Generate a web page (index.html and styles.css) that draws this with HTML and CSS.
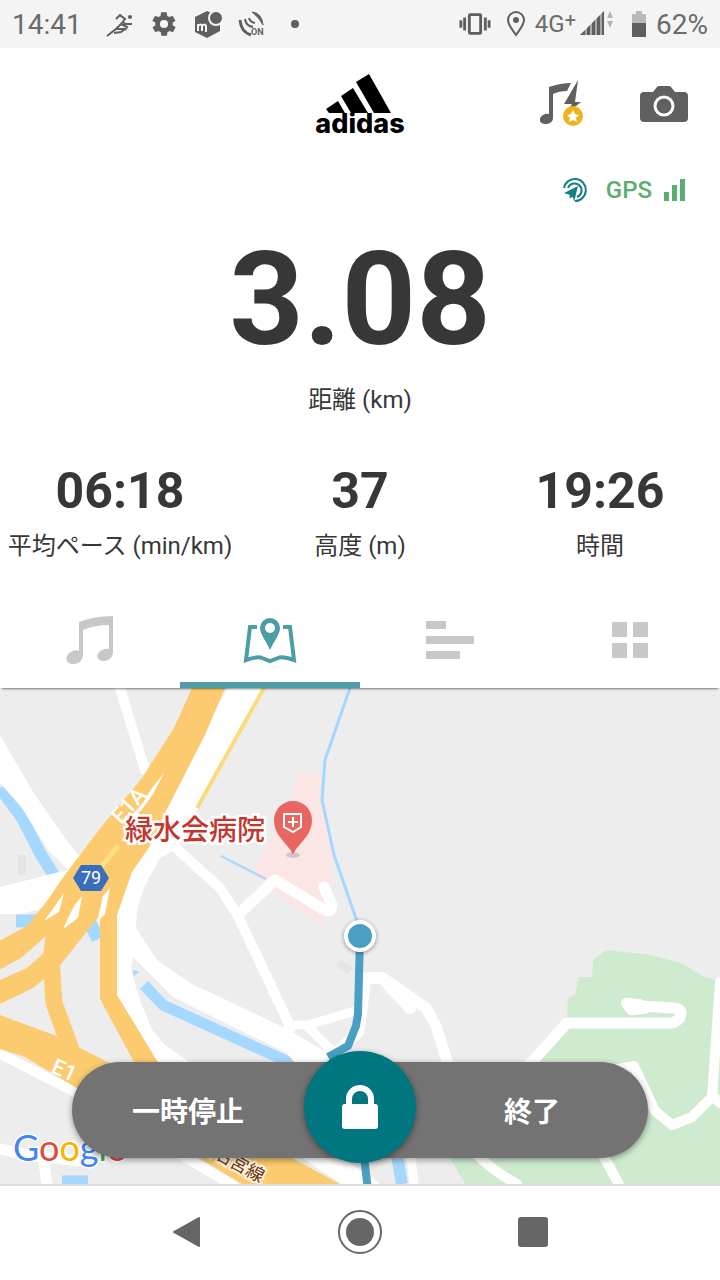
FILE: index.html
```html
<!DOCTYPE html>
<html lang="ja">
<head>
    <meta charset="UTF-8">
    <meta name="viewport" content="width=device-width, initial-scale=1.0">
    <title>adidas Running</title>
    <link rel="stylesheet" href="styles.css">
</head>
<body>

<div class="status-bar">
    <div class="status-left">
        <span class="clock">14:41</span>
        <svg class="status-icon" viewBox="0 0 28 28" fill="none" stroke="#5f5f5f" stroke-width="2">
            <path d="M1 26l9-7h9l-4 3-7 1M10 19l5-5 6 3-2 3M10 9l4-4 5 4-4 5M17 12l2 2h7"/>
            <circle cx="24" cy="7" r="2" fill="#5f5f5f" stroke="none"/>
        </svg>
        <svg class="status-icon" viewBox="0 0 24 24" fill="#5f5f5f">
            <path d="M19.4 13a7.500 7.500 0 0 0 0-2l2.100-1.600a.5.5 0 0 0 .1-.6l-2-3.500a.5.5 0 0 0-.6-.2l-2.500 1a7.300 7.300 0 0 0-1.700-1l-.4-2.600a.5.5 0 0 0-.5-.5h-4a.5.5 0 0 0-.5.5l-.4 2.600a7.300 7.300 0 0 0-1.700 1l-2.500-1a.5.5 0 0 0-.6.2l-2 3.500a.5.5 0 0 0 .1.600L4.600 11a7.500 7.500 0 0 0 0 2l-2.100 1.600a.5.5 0 0 0-.1.600l2 3.500c.1.200.4.300.6.200l2.500-1a7.300 7.300 0 0 0 1.700 1l.4 2.600c0 .3.200.5.500.5h4c.3 0 .5-.2.500-.5l.4-2.600a7.300 7.300 0 0 0 1.700-1l2.500 1c.2.100.5 0 .6-.2l2-3.500a.5.5 0 0 0-.1-.6zM12 15.500a3.500 3.500 0 1 1 0-7 3.500 3.500 0 0 1 0 7z"/>
        </svg>
        <svg class="status-icon" viewBox="0 0 28 28" fill="#5f5f5f">
            <path d="M1 7l12-6 13 6v14l-13 7-12-6z"/>
            <path d="M4 21v-7M4 16q3-3 4 0v5M8 16q3-3 4 0v6" fill="none" stroke="#f4f4f4" stroke-width="2"/>
            <circle cx="22" cy="8" r="7" stroke="#f4f4f4" stroke-width="2"/>
        </svg>
        <svg class="status-icon" viewBox="0 0 28 28" fill="none" stroke="#5f5f5f" stroke-width="2">
            <path d="M2 10q1 12 11 15" stroke-width="3"/>
            <path d="M7 9q1 7 8 8M11 8q1 4 6 5"/>
            <path d="M14 2q10 1 11 13-4-8-11-13z" fill="#5f5f5f" stroke-width="1"/>
            <text x="13" y="25" class="tiny-text">ON</text>
        </svg>
        <svg class="status-icon" viewBox="0 0 28 28"><circle cx="13" cy="14" r="4" fill="#5f5f5f"/></svg>
    </div>
    <div class="status-right">
        <svg width="32" height="26" viewBox="0 0 34 26" fill="none" stroke="#5f5f5f">
            <rect x="11" y="3" width="12" height="20" rx="1" stroke-width="3"/>
            <path d="M2 9v8M6 6v14M28 6v14M32 9v8" stroke-width="3"/>
        </svg>
        <svg width="18" height="26" viewBox="0 0 18 26" fill="none" stroke="#5f5f5f" stroke-width="2">
            <path d="M9 24C5 18 1 14 1 9a8 8 0 0 1 16 0c0 5-4 9-8 15z"/>
            <circle cx="9" cy="9" r="3" fill="#5f5f5f" stroke="none"/>
        </svg>
        <div class="network">
            <span class="network-type">4G<sup>+</sup></span>
            <svg width="36" height="26" viewBox="0 0 36 26">
                <path d="M0 24l24-24v24z" fill="#5f5f5f"/>
                <path d="M6 16v8M11 10v14M16 5v19M21 1v23" stroke="#f4f4f4" stroke-width="1"/>
                <path d="M27 7l3-7 3 7zM27 10l3 7 3-7z" fill="#b5b5b5"/>
            </svg>
        </div>
        <div class="battery">
            <svg width="14" height="26" viewBox="0 0 14 26">
                <path d="M0 3h4V0h6v3h4v9H0z" fill="#b9b9b9"/>
                <path d="M0 12h14v14H0z" fill="#5f5f5f"/>
            </svg>
            <span>62%</span>
        </div>
    </div>
</div>

<header class="header">
    <div class="logo">
        <svg width="89" height="40" viewBox="0 0 89 40">
            <path d="M40 8l13-8 22 39H58zM25 22l12-8 15 25H35zM10 35l12-8 7 12H13z"/>
        </svg>
        <span class="logo-name">adidas</span>
    </div>
    <div class="header-actions">
        <button class="icon-button" aria-label="音楽">
            <svg width="46" height="48" viewBox="0 0 46 48">
                <path d="M9 7q12-4 22-4l-4 8q-8 0-14 3v24c0 4-4 6-8 6-6 0-7-6-2-9q3-2 6-1z" fill="#606060"/>
                <path d="M38 0L24 24h8l-6 10 15-12h-6z" fill="#606060"/>
                <circle cx="33" cy="36" r="10" fill="#eeb41c"/>
                <path d="M33 30l2 4 4 1-3 3 1 4-4-2-4 2 1-4-3-3 4-1z" fill="#fff"/>
            </svg>
        </button>
        <button class="icon-button" aria-label="カメラ">
            <svg width="48" height="36" viewBox="0 0 48 36">
                <path d="M4 6h9l4-5q1-1 2-1h10q1 0 2 1l4 5h9q4 0 4 4v22q0 4-4 4H4q-4 0-4-4V10q0-4 4-4z" fill="#606060"/>
                <circle cx="24" cy="20" r="9" fill="none" stroke="#fff" stroke-width="3"/>
            </svg>
        </button>
    </div>
</header>

<div class="gps">
    <svg width="25" height="25" viewBox="0 0 25 25" fill="none" stroke="#147e85" stroke-width="2">
        <path d="M1 10A11 11 0 1 1 12 23"/>
        <path d="M5 10a7 7 0 1 1 9 9"/>
        <path d="M15 8L1 15l6 2-1 3 4-1 1 5z" fill="#147e85" stroke="none"/>
    </svg>
    <span>GPS</span>
    <svg width="22" height="22" viewBox="0 0 22 22" fill="#5bad72">
        <path d="M0 13h5v9H0zM8 6h5v16H8zM16 0h5v22h-5z"/>
    </svg>
</div>

<main>
    <div class="distance">
        <div class="distance-value">3.08</div>
        <div class="label">距離 (km)</div>
    </div>
    <div class="stats">
        <div class="stat">
            <div class="stat-value">06:18</div>
            <div class="label">平均ペース (min/km)</div>
        </div>
        <div class="stat">
            <div class="stat-value">37</div>
            <div class="label">高度 (m)</div>
        </div>
        <div class="stat">
            <div class="stat-value">19:26</div>
            <div class="label">時間</div>
        </div>
    </div>
</main>

<nav class="tabs">
    <button class="tab" aria-label="音楽">
        <svg width="48" height="48" viewBox="0 0 48 48">
            <path d="M13 6Q28 0 47 0v36c0 5-4 9-9 9-8 0-9-8-2-11q4-2 7-1V9q-14 0-26 5v24c0 6-4 10-9 10-9 0-10-9-3-12q4-3 8-1z"/>
        </svg>
    </button>
    <button class="tab active" aria-label="地図">
        <svg width="54" height="48" viewBox="0 0 54 48">
            <path d="M14 11H7L3 44q12-4 16-2l8 3 8-3q4-2 16 2l-4-33h-7" fill="none" stroke="#4d9da6" stroke-width="4"/>
            <path d="M27 34C23 25 17 18 17 12a10 10 0 0 1 20 0c0 6-6 13-10 22z"/>
            <circle cx="27" cy="12" r="5" fill="#fff"/>
        </svg>
    </button>
    <button class="tab" aria-label="ラップ">
        <svg width="48" height="38" viewBox="0 0 48 38">
            <path d="M0 0h20v8H0zM0 15h48v8H0zM0 30h34v8H0z"/>
        </svg>
    </button>
    <button class="tab" aria-label="詳細">
        <svg width="36" height="36" viewBox="0 0 36 36">
            <path d="M0 0h15v15H0zM21 0h15v15H21zM0 21h15v15H0zM21 21h15v15H21z"/>
        </svg>
    </button>
</nav>

<section class="map">
    <svg class="map-canvas" viewBox="0 688 720 496" preserveAspectRatio="xMidYMid slice">
        <!-- parks and hospital area -->
        <path class="park" d="M606 950l44 5 31 8 22 13 17 6v202H465l-15-26 60-58 57-82 1-20 7-3 4-18h13l1-17z"/>
        <path d="M298 772h22l4 40 10 50-12 63-50-35-20-15 12-25 26-40z" fill="#fbe6e5"/>

        <!-- water -->
        <g class="water">
            <path d="M350 688l-25 72-3 40 12 55 26 75" stroke-width="3"/>
            <path d="M221 856l45 23" stroke-width="2"/>
            <path d="M0 788l22 30 18 35 15 24" stroke-width="12"/>
            <path d="M16 921h28M76 895l22 44" stroke-width="13"/>
            <path d="M144 985l19 20 70 32 60 27" stroke-width="11"/>
            <path d="M62 1180h26" stroke-width="9"/>
            <path d="M396 1150l6 34" stroke-width="12"/>
        </g>

        <!-- white roads -->
        <path class="road-fill" d="M0 735l35 60 33 47 12 15-10 15-22-22-26-42L0 783zM0 887l75-19-30 40-25 6H0z"/>
        <path class="road-fill" d="M228 688H262L198 808 178 848 160 858 145 885 137 910 136 928 157 960 190 983 283 1027 323 1050 370 1070H300L287 1053 233 1027 173 997 133 957 131 970 140 1000 152 1030 165 1045 192 1064H140L100 1000V915z"/>
        <path d="M133 970l6 2-5 4z" fill="#a5d8ff"/>
        <g class="road">
            <path d="M120 688l25 82" stroke-width="10"/>
            <path d="M176 848l44 40 18 28 17 36 36 76" stroke-width="10"/>
            <path d="M240 913l35-33 48 29q9 5 9-4l-8-18" stroke-width="11"/>
            <path d="M288 1025h20l50-15M308 1027l24 24" stroke-width="9"/>
            <path d="M325 1062l34-30 7-54h17l43 30 10 18 12 38" stroke-width="11"/>
            <path d="M370 978h12l28 30" stroke-width="12"/>
            <path d="M530 1064l37-41h104q10-2 10-11-1-4-8-4l-33-2" stroke-width="11"/>
            <path d="M626 1003l14 1 5 5-14 1z" stroke-width="10"/>
            <path d="M720 982l-8 115-20 20-20 8-17-14-21-45-32 6M712 1095l8 8" stroke-width="10"/>
            <path d="M474 1152q20 20 43 32M600 1150l20 36" stroke-width="10"/>
            <path d="M410 1150l4 34" stroke-width="9"/>
            <path d="M0 1054l75 38 125 74 34 20" stroke-width="10"/>
            <path d="M0 1149l28 6 50 6M43 1155l4 30" stroke-width="11"/>
            <path d="M250 1110l120 80" stroke-width="22"/>
        </g>
        <path d="M264 688l-67 120" fill="none" stroke="#fbdc7c" stroke-width="4"/>
        <path d="M338 963l12 8M22 855v20" fill="none" stroke="#e4e4e4" stroke-width="8"/>

        <!-- expressways -->
        <path class="highway-fill" d="M192 688h33l-20 47-39 76-16 35-18 26-15 43v80l42 69h-24l-35-65v-80l8-14-50 63-25 20-33 16v-24l27-12 27-24-8-8-25 22-22 12v-29l28-15 20-25 17-25 38-50 40-48 32-50z"/>
        <path d="M72 884l-16 40-5 34 3 45 17 47" fill="none" stroke="#fccb70" stroke-width="17"/>
        <path class="highway-fill" d="M0 1015l54 20 40 20 150 77 96 52h-98l-48-29-114-65-55-33-25-8z"/>
        <path class="road-fill" d="M164 773l-11 21-7 10-11 14-5-1 12-13 10-16zM64 893l-12 17-8 11 15-9zM82 896l-8 10-11 23 15-11zM110 888l-7 8-6 26 8-8z"/>
        <path d="M118 846l-17 21" stroke="#fde085" stroke-width="5"/>
        <text class="road-name" x="121" y="825" transform="rotate(-48 121 825)">E1A</text>
        <text class="road-name" x="50" y="1072" transform="rotate(24 50 1072)">E1</text>
        <text class="line-name" x="197" y="1148" transform="rotate(29 197 1148)">西名宮線</text>

        <path d="M81 865h20l8 13-8 13H81l-8-13z" fill="#3b6dbd"/>
        <text class="route-number" x="91" y="884">79</text>

        <!-- hospital -->
        <text class="place-name" x="125" y="840">緑水会病院</text>
        <ellipse cx="293" cy="855" rx="7" ry="3" fill="#d9c3cc"/>
        <path d="M293 855c-3-10-19-18-19-35a19 19 0 0 1 38 0c0 17-16 25-19 35z" fill="#e96660"/>
        <path d="M284 814h17v13l-8 5-9-5zM293 817v10M288 822h10" fill="none" stroke="#fff" stroke-width="2"/>

        <!-- run track -->
        <path d="M360 936l-2 78-2 12-8 20-20 11M362 1140l6 50" fill="none" stroke="#4a9fc3" stroke-width="8"/>
        <circle class="position" cx="360" cy="936" r="14"/>

        <text class="google" x="13" y="1161"><tspan fill="#4285f4">G</tspan><tspan fill="#dd4b3e">o</tspan><tspan fill="#f4b400">o</tspan><tspan fill="#4285f4">g</tspan><tspan fill="#34a853">l</tspan><tspan fill="#dd4b3e">e</tspan></text>
    </svg>

    <div class="controls">
        <button class="control">一時停止</button>
        <button class="control">終了</button>
        <button class="lock" aria-label="ロック">
            <svg width="36" height="44" viewBox="0 0 36 44">
                <path d="M7 22V14a11 11 0 0 1 22 0v8" fill="none" stroke="#fff" stroke-width="6"/>
                <rect y="19" width="36" height="25" rx="3" fill="#fff"/>
            </svg>
        </button>
    </div>
</section>

<div class="system-nav">
    <button aria-label="戻る">
        <svg width="30" height="34" viewBox="0 0 30 34"><path d="M2 17L27 3v28z" fill="#666" stroke="#666" stroke-width="2" stroke-linejoin="round"/></svg>
    </button>
    <button aria-label="ホーム">
        <svg width="44" height="44" viewBox="0 0 44 44"><circle cx="22" cy="22" r="21" fill="none" stroke="#666" stroke-width="2"/><circle cx="22" cy="22" r="14" fill="#666"/></svg>
    </button>
    <button aria-label="履歴">
        <svg width="30" height="30" viewBox="0 0 30 30"><rect width="30" height="30" rx="3" fill="#666"/></svg>
    </button>
</div>

</body>
</html>
```
FILE: styles.css
```css
* {
    box-sizing: border-box;
}
body {
    margin: 0;
    min-height: 100vh;
    display: flex;
    flex-direction: column;
    background: #fff;
    color: #373737;
    font-family: Roboto, "Noto Sans CJK JP", sans-serif;
}
button {
    padding: 0;
    border: none;
    background: none;
    font-family: inherit;
    cursor: pointer;
}
svg {
    display: block;
}

/* Status bar */
.status-bar {
    display: flex;
    justify-content: space-between;
    height: 48px;
    padding: 0 12px;
    background: #f4f4f4;
    color: #6b6b6b;
    font-size: 28px;
}
.status-left, .status-right, .network, .battery {
    display: flex;
    align-items: center;
}
.status-left, .status-right {
    gap: 16px;
}
.clock {
    margin-right: 8px;
}
.status-icon {
    width: 28px;
    height: 28px;
}
.tiny-text {
    fill: #5f5f5f;
    stroke: none;
    font-size: 9px;
    font-weight: 700;
}
.network {
    gap: 4px;
    margin-left: -6px;
}
.network-type {
    font-size: 24px;
    line-height: 24px;
}
.network-type sup {
    font-size: 20px;
    line-height: 0;
    vertical-align: 5px;
}
.battery {
    gap: 10px;
}

/* Header */
.header {
    display: grid;
    grid-template-columns: 1fr auto 1fr;
    align-items: center;
    height: 112px;
    padding: 0 32px;
}
.logo {
    grid-column: 2;
    display: flex;
    flex-direction: column;
    align-items: center;
    color: #000;
}
.logo-name {
    font-family: Inter, sans-serif;
    font-size: 27px;
    font-weight: 800;
    line-height: 20px;
}
.header-actions {
    display: flex;
    justify-content: flex-end;
    align-items: center;
    gap: 54px;
}
.gps {
    display: flex;
    justify-content: flex-end;
    align-items: center;
    height: 60px;
    padding: 0 34px;
    color: #5bad72;
    font-size: 24px;
    font-weight: 500;
}
.gps span {
    margin: 0 12px 0 18px;
}

/* Numbers */
.distance {
    text-align: center;
}
.distance-value {
    font-size: 130px;
    font-weight: 700;
    line-height: 160px;
}
.label {
    font-size: 24px;
    line-height: 40px;
    white-space: nowrap;
}
.stats {
    display: grid;
    grid-template-columns: repeat(3, 1fr);
    margin-top: 40px;
    text-align: center;
}
.stat-value {
    margin-bottom: 4px;
    font-size: 50px;
    font-weight: 700;
    line-height: 62px;
}

/* Tabs */
.tabs {
    position: relative;
    z-index: 1;
    display: grid;
    grid-template-columns: repeat(4, 1fr);
    height: 96px;
    margin-top: 26px;
    box-shadow: 0 3px 2px -2px rgba(0, 0, 0, 0.5);
}
.tab {
    display: flex;
    align-items: center;
    justify-content: center;
    border-top: 6px solid transparent;
    border-bottom: 6px solid transparent;
    fill: #c8c8c8;
}
.tab.active {
    border-bottom-color: #4d9da6;
    fill: #4d9da6;
}

/* Map */
.map {
    position: relative;
    flex: 1;
    border-bottom: 2px solid #dcdcdc;
    background: #ededed;
    overflow: hidden;
}
.map-canvas {
    width: 100%;
    height: 100%;
}
.park {
    fill: #ceebd0;
}
.water path {
    fill: none;
    stroke: #a5d8ff;
}
.road-fill {
    fill: #fff;
}
.road path {
    fill: none;
    stroke: #fff;
    stroke-linecap: round;
    stroke-linejoin: round;
}
.highway-fill {
    fill: #fccb70;
}
.road-name {
    fill: #fff;
    font-size: 22px;
    font-weight: 500;
}
.line-name {
    fill: #6b3513;
    stroke: #fff3dc;
    stroke-width: 4px;
    paint-order: stroke;
    font-size: 18px;
}
.route-number {
    fill: #fff;
    font-size: 18px;
    text-anchor: middle;
}
.place-name {
    fill: #c5352d;
    stroke: #fff;
    stroke-width: 5px;
    paint-order: stroke;
    font-size: 28px;
    font-weight: 500;
}
.position {
    fill: #4a9fc3;
    stroke: #fff;
    stroke-width: 4px;
    filter: drop-shadow(0 1px 2px rgba(0, 0, 0, 0.4));
}
.google {
    stroke: #fff;
    stroke-width: 3px;
    paint-order: stroke;
    font-family: Lato, sans-serif;
    font-size: 36px;
}

.controls {
    position: absolute;
    left: 10%;
    right: 10%;
    bottom: 26px;
    display: grid;
    grid-template-columns: 1fr 1fr;
    height: 96px;
    border-radius: 48px;
    background: #737373;
    box-shadow: 0 2px 6px rgba(0, 0, 0, 0.4);
}
.control {
    color: #fff;
    font-size: 28px;
    font-weight: 700;
}
.control:first-child {
    padding-right: 56px;
}
.control:nth-child(2) {
    padding-left: 56px;
}
.lock {
    position: absolute;
    left: 50%;
    bottom: -5px;
    display: flex;
    align-items: center;
    justify-content: center;
    width: 112px;
    height: 112px;
    margin-left: -56px;
    border-radius: 50%;
    background: #007680;
    box-shadow: 0 2px 6px rgba(0, 0, 0, 0.4);
}

.system-nav {
    display: flex;
    align-items: center;
    justify-content: space-evenly;
    height: 94px;
    padding: 0 36px 2px;
}
```
